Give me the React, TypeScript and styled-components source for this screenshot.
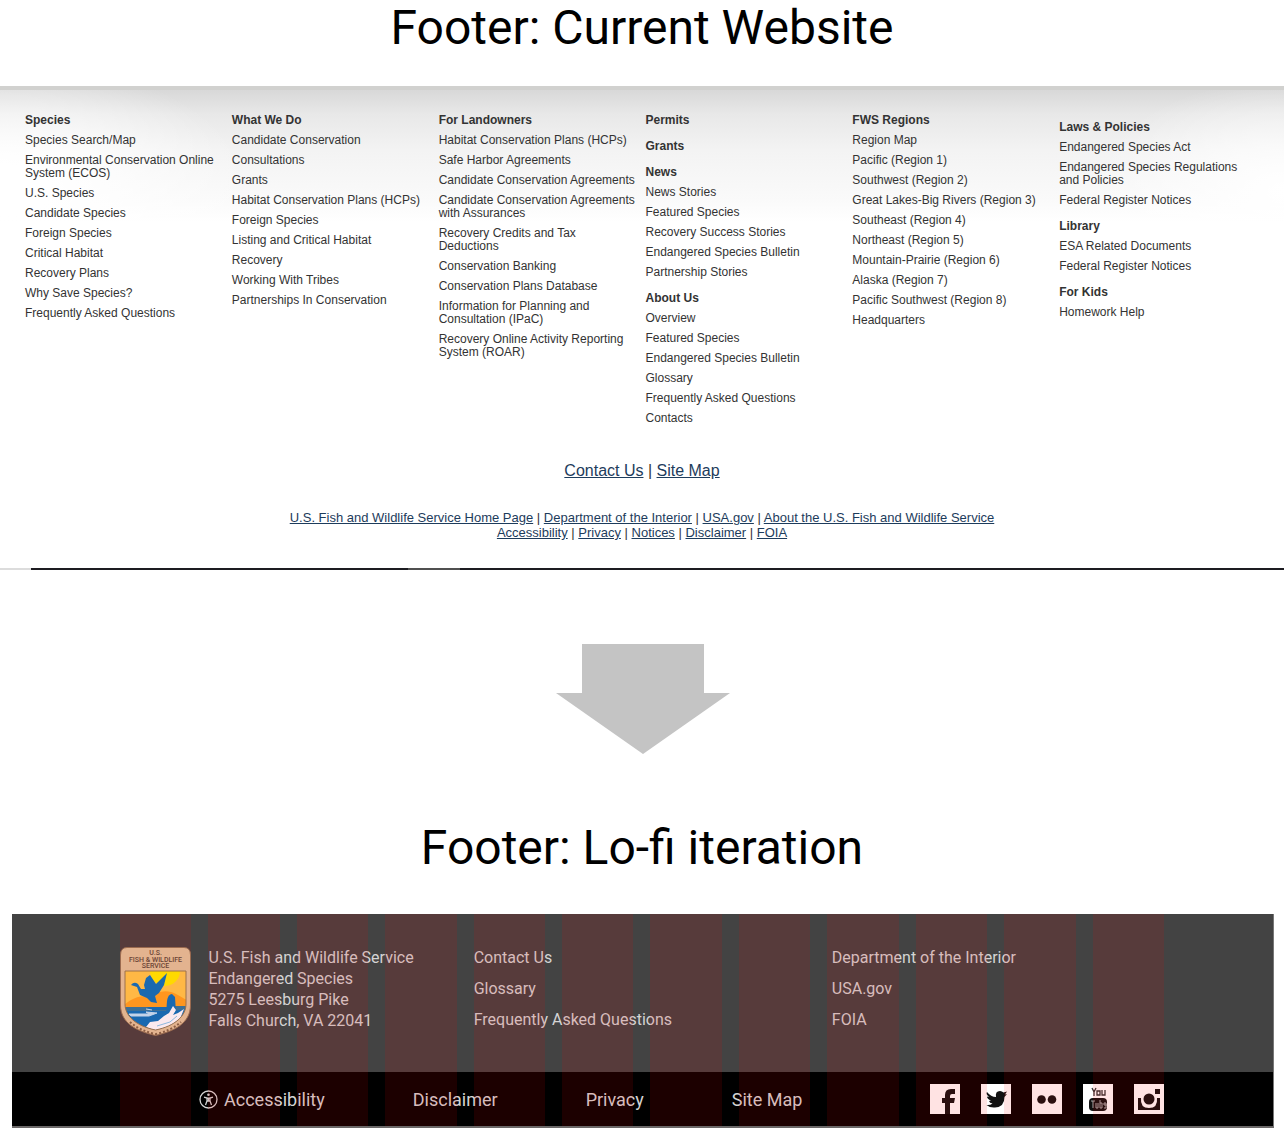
import React from "react";
import styled, { createGlobalStyle } from "styled-components";

const arial = `"Liberation Sans", Arial, sans-serif`;
const roboto = `Roboto, sans-serif`;

const GlobalStyle = createGlobalStyle`
  * { box-sizing: border-box; }
  body { margin: 0; background: #fff; color: #000; font-family: ${roboto}; }
  ul { list-style: none; margin: 0; padding: 0; }
  a { color: inherit; text-decoration: none; }
`;

const Page = styled.main`
  display: flex;
  flex-direction: column;
`;

const Heading = styled.h1`
  margin: 0;
  font-size: 48px;
  line-height: 56px;
  font-weight: 400;
  text-align: center;
`;

const CurrentFooter = styled.section`
  margin-top: 30px;
  padding-top: 24px;
  border-top: 4px solid #d1d1cf;
  background:
    radial-gradient(ellipse 250px 130px at 0 100px, #fff 0%, #fff 20%, #fff0 100%) no-repeat,
    radial-gradient(ellipse 190px 110px at 100% 100px, #fff 0%, #fff0 100%) no-repeat,
    linear-gradient(#d8d8d8 0, #e8e8e8 24px, #f3f3f3 60px, #fafafa 110px, #fff 132px) no-repeat;
  font-family: ${arial};
  color: #333;
`;

const LinkGrid = styled.nav`
  display: grid;
  grid-template-columns: repeat(6, 1fr);
  padding: 0 18px 0 25px;
`;

const LinkColumn = styled.div<{ $lowered?: boolean }>`
  display: flex;
  flex-direction: column;
  gap: 13px;
  padding-top: ${(p) => (p.$lowered ? 7 : 0)}px;
  padding-right: 8px;
`;

const LinkList = styled.ul`
  display: flex;
  flex-direction: column;
  gap: 7px;
  font-size: 12px;
  line-height: 13px;
`;

const LinkItem = styled.li<{ $title?: boolean }>`
  font-weight: ${(p) => (p.$title ? 700 : 400)};
`;

const ContactLine = styled.p`
  margin: 36px 0 0;
  font-size: 16px;
  line-height: 20px;
  text-align: center;
`;

const LegalLines = styled.div`
  margin-top: 29px;
  padding-bottom: 28px;
  font-size: 13px;
  line-height: 15px;
  text-align: center;
`;

const LegalRow = styled.div``;

const SiteLink = styled.a`
  color: #1d3c5c;
  text-decoration: underline;
`;

const Rule = styled.hr`
  width: 100%;
  height: 2px;
  margin: 0;
  border: 0;
  background: linear-gradient(
    to right,
    #dcdcdc 31px,
    #1d1c21 31px 408px,
    #505050 408px 460px,
    #1d1c21 460px
  );
`;

const ArrowArea = styled.div`
  display: flex;
  justify-content: center;
  padding: 74px 0 66px;
`;

const LofiFooter = styled.footer`
  position: relative;
  margin: 38px 10px 0 12px;
  border-right: 1px solid #777;
  border-bottom: 2px solid #6b6868;
  background: #434343;
  color: #d4d4d4;
  font-size: 16px;
  line-height: 21px;
`;

const InfoBand = styled.div`
  display: grid;
  grid-template-columns: repeat(12, 1fr);
  column-gap: 17px;
  height: 158px;
  padding: 33px 109px 0 108px;
`;

const LogoCell = styled.div`
  position: relative;
  z-index: 1;
  display: flex;
`;

const Address = styled.address`
  grid-column: 2 / span 3;
  font-style: normal;
  white-space: nowrap;
`;

const InfoLists = styled.div`
  grid-column: 5 / span 8;
  display: grid;
  grid-template-columns: 1fr 1fr;
  column-gap: 26px;
`;

const InfoList = styled.ul`
  display: flex;
  flex-direction: column;
  gap: 10px;
`;

const BottomBand = styled.div`
  display: flex;
  align-items: center;
  height: 54px;
  padding: 0 109px 0 187px;
  background: #000;
`;

const BottomLinks = styled.ul`
  display: flex;
  gap: 88px;
  font-size: 18px;
`;

const BottomLink = styled.a`
  display: flex;
  align-items: center;
  gap: 6px;
  white-space: nowrap;
`;

const Social = styled.ul`
  display: flex;
  gap: 21px;
  margin-left: auto;
`;

const SocialLink = styled.a`
  display: block;
  width: 30px;
  height: 30px;
  background: #fff;
`;

const GridOverlay = styled.div`
  position: absolute;
  inset: 0;
  display: grid;
  grid-template-columns: repeat(12, 1fr);
  column-gap: 17px;
  padding: 0 109px 0 108px;
  pointer-events: none;
`;

const Stripe = styled.div`
  background: rgba(255, 0, 0, 0.11);
`;

type Group = [string, ...string[]];

const columns: Group[][] = [
  [[
    "Species", "Species Search/Map", "Environmental Conservation Online System (ECOS)", "U.S. Species",
    "Candidate Species", "Foreign Species", "Critical Habitat", "Recovery Plans", "Why Save Species?",
    "Frequently Asked Questions",
  ]],
  [[
    "What We Do", "Candidate Conservation", "Consultations", "Grants", "Habitat Conservation Plans (HCPs)",
    "Foreign Species", "Listing and Critical Habitat", "Recovery", "Working With Tribes",
    "Partnerships In Conservation",
  ]],
  [[
    "For Landowners", "Habitat Conservation Plans (HCPs)", "Safe Harbor Agreements",
    "Candidate Conservation Agreements", "Candidate Conservation Agreements with Assurances",
    "Recovery Credits and Tax Deductions", "Conservation Banking", "Conservation Plans Database",
    "Information for Planning and Consultation (IPaC)", "Recovery Online Activity Reporting System (ROAR)",
  ]],
  [
    ["Permits"],
    ["Grants"],
    ["News", "News Stories", "Featured Species", "Recovery Success Stories", "Endangered Species Bulletin", "Partnership Stories"],
    ["About Us", "Overview", "Featured Species", "Endangered Species Bulletin", "Glossary", "Frequently Asked Questions", "Contacts"],
  ],
  [[
    "FWS Regions", "Region Map", "Pacific (Region 1)", "Southwest (Region 2)",
    "Great Lakes-Big Rivers (Region 3)", "Southeast (Region 4)", "Northeast (Region 5)",
    "Mountain-Prairie (Region 6)", "Alaska (Region 7)", "Pacific Southwest (Region 8)", "Headquarters",
  ]],
  [
    ["Laws & Policies", "Endangered Species Act", "Endangered Species Regulations and Policies", "Federal Register Notices"],
    ["Library", "ESA Related Documents", "Federal Register Notices"],
    ["For Kids", "Homework Help"],
  ],
];

const contactLinks = ["Contact Us", "Site Map"];
const legalRows = [
  ["U.S. Fish and Wildlife Service Home Page", "Department of the Interior", "USA.gov", "About the U.S. Fish and Wildlife Service"],
  ["Accessibility", "Privacy", "Notices", "Disclaimer", "FOIA"],
];

const infoLists = [
  ["Contact Us", "Glossary", "Frequently Asked Questions"],
  ["Department of the Interior", "USA.gov", "FOIA"],
];

function PipedLinks({ items }: { items: string[] }) {
  return (
    <>
      {items.map((item, i) => (
        <React.Fragment key={item}>
          {i > 0 && " | "}
          <SiteLink href="#">{item}</SiteLink>
        </React.Fragment>
      ))}
    </>
  );
}

function Logo() {
  return (
    <svg width="71" height="89" viewBox="0 0 71 89" role="img" aria-label="U.S. Fish and Wildlife Service">
      <defs>
        <clipPath id="scene">
          <path d="M5 24H66V57C66 69 55 79 35.500 83C16 79 5 69 5 57Z" />
        </clipPath>
      </defs>
      <path d="M7 0.500H64Q70.500 0.500 70.500 8V58C70.500 76 55 84 35.500 88.500C16 84 0.500 76 0.500 58V8Q0.500 0.500 7 0.500Z" fill="#e3b38f" stroke="#9a6a4f" />
      <g fill="#6b4435" fontFamily="Roboto, sans-serif" fontWeight="500" fontSize="7" textAnchor="middle">
        <text x="35.500" y="8">U.S.</text>
        <text x="35.500" y="14.500">FISH &amp; WILDLIFE</text>
        <text x="35.500" y="21">SERVICE</text>
      </g>
      <g clipPath="url(#scene)">
        <rect x="4" y="23" width="63" height="62" fill="#ffb845" />
        <circle cx="45" cy="24" r="15" fill="#ffd900" />
        <path d="M4 58C14 50 21 48 30 50C36 45 44 43 51 45C58 47 62 51 67 53V62H4Z" fill="#ff961f" />
        <rect x="4" y="60" width="63" height="26" fill="#1a69b0" />
        <path d="M4 60H27L31 63H46L50 59H67V62L52 64H4Z" fill="#3f6f94" />
        <path d="M46 67L47 54Q48 47 52 47L55 50L56 67Z" fill="#1a69b0" />
        <path d="M53 59L56 63L53 68L58 66L64 62L60 72L50 80L36 84L26 80L30 75L38 74L44 69L49 66Z" fill="#fbe9ee" />
        <path d="M37 79L50 75L57 69" fill="none" stroke="#8db7dc" strokeWidth="1" />
        <path d="M9 67H29L26 65L37 66L29 69H11ZM26 62L32 63" fill="#c3d3e8" stroke="#c3d3e8" strokeWidth="1" />
      </g>
      <path d="M11 38Q14 34 18 37L21 42L25 42L24 38L26 31L30 28L34 34L36 37L47 26L44 38L39 46L35 49L37 56L31 55L27 51L20 48L17 40Z" fill="#1a69b0" />
      <path d="M5 24H66V57C66 69 55 79 35.500 83C16 79 5 69 5 57Z" fill="none" stroke="#9c704d" />
      <path d="M10 75Q20 84 35.500 87Q51 84 61 75" fill="none" stroke="#8c5d43" strokeWidth="2" strokeDasharray="2 2" />
    </svg>
  );
}

function AccessIcon() {
  return (
    <svg width="19" height="19" viewBox="0 0 19 19" fill="none" stroke="#d4d4d4" aria-hidden="true">
      <circle cx="9.500" cy="9.500" r="8.500" strokeWidth="1.300" />
      <circle cx="9.500" cy="4.800" r="1.300" fill="#d4d4d4" stroke="none" />
      <path d="M5 7.200L8 8V11L6.500 15M14 7.200L11 8V11L12.500 15M8 8.200H11M8 11H11M9.500 8V11" strokeWidth="1.300" />
    </svg>
  );
}

const socialIcons: { name: string; art: React.ReactNode }[] = [
  {
    name: "Facebook",
    art: <path d="M15 30V19H12V14H15V11Q15 5 21 5H25V10H22Q20 10 20 12V14H25L24 19H20V30Z" />,
  },
  {
    name: "Twitter",
    art: <path d="M6 8Q10 13 15 13Q14 7 19 7Q21 7 22.500 8.500L26 7.500L24 10.500L26 10L23.500 13Q23.500 23 14 23.500Q9 24 5.500 21Q9 21.500 11.500 19.500Q8.500 19 8 17L10 16.500Q6 15 6 12.500L8 13Q4.500 10 6 8Z" />,
  },
  {
    name: "Flickr",
    art: <><circle cx="9.500" cy="15.500" r="4.300" /><circle cx="20" cy="15.500" r="4.300" /></>,
  },
  {
    name: "YouTube",
    art: (
      <>
        <path d="M9 4L11 8V12M13 4L11 8M14 7V11H17V7ZM19 6V11H22V6" fill="none" stroke="#333" strokeWidth="1.300" />
        <rect x="6" y="14" width="18" height="13" rx="4" />
        <path d="M8 17H12M10 17V24M13 19V24H15V19M17 16V24H19V19H17M24 21H21V19H23V24H21" fill="none" stroke="#aaa" strokeWidth="1" />
      </>
    ),
  },
  {
    name: "Instagram",
    art: (
      <>
        <circle cx="15" cy="15" r="5.500" />
        <path d="M4 14H7Q6 24 15 24Q24 24 23 14H26V26H4Z" />
        <rect x="21" y="5" width="5" height="5" />
      </>
    ),
  },
];

export default function App() {
  return (
    <Page>
      <GlobalStyle />
      <Heading>Footer: Current Website</Heading>
      <CurrentFooter>
        <LinkGrid aria-label="Site sections">
          {columns.map((groups, c) => (
            <LinkColumn key={c} $lowered={c === 5}>
              {groups.map((group) => (
                <LinkList key={group[0]}>
                  {group.map((label, i) => (
                    <LinkItem key={label} $title={i === 0}>
                      <a href="#">{label}</a>
                    </LinkItem>
                  ))}
                </LinkList>
              ))}
            </LinkColumn>
          ))}
        </LinkGrid>
        <ContactLine><PipedLinks items={contactLinks} /></ContactLine>
        <LegalLines>
          {legalRows.map((row) => (
            <LegalRow key={row[0]}><PipedLinks items={row} /></LegalRow>
          ))}
        </LegalLines>
        <Rule />
      </CurrentFooter>
      <ArrowArea>
        <svg width="176" height="110" viewBox="0 0 176 110" aria-hidden="true">
          <path d="M28 0H150V49H176L89 110L2 49H28Z" fill="#c4c4c4" />
        </svg>
      </ArrowArea>
      <Heading as="h2">Footer: Lo-fi iteration</Heading>
      <LofiFooter>
        <InfoBand>
          <LogoCell><Logo /></LogoCell>
          <Address>
            U.S. Fish and Wildlife Service<br />
            Endangered Species<br />
            5275 Leesburg Pike<br />
            Falls Church, VA 22041
          </Address>
          <InfoLists>
            {infoLists.map((list) => (
              <InfoList key={list[0]}>
                {list.map((label) => (
                  <li key={label}><a href="#">{label}</a></li>
                ))}
              </InfoList>
            ))}
          </InfoLists>
        </InfoBand>
        <BottomBand>
          <BottomLinks>
            <li><BottomLink href="#"><AccessIcon />Accessibility</BottomLink></li>
            <li><BottomLink href="#">Disclaimer</BottomLink></li>
            <li><BottomLink href="#">Privacy</BottomLink></li>
            <li><BottomLink href="#">Site Map</BottomLink></li>
          </BottomLinks>
          <Social>
            {socialIcons.map(({ name, art }) => (
              <li key={name}>
                <SocialLink href="#" aria-label={name}>
                  <svg width="30" height="30" viewBox="0 0 30 30" fill="#111" aria-hidden="true">{art}</svg>
                </SocialLink>
              </li>
            ))}
          </Social>
        </BottomBand>
        <GridOverlay aria-hidden="true">
          {Array.from({ length: 12 }, (_, i) => <Stripe key={i} />)}
        </GridOverlay>
      </LofiFooter>
    </Page>
  );
}
